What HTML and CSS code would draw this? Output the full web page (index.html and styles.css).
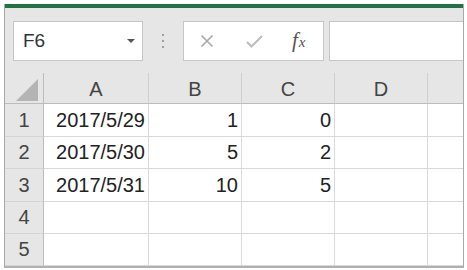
FILE: index.html
```html
<!DOCTYPE html>
<html>
<head>
<meta charset="utf-8">
<link rel="stylesheet" href="styles.css">
</head>
<body>
<div class="frame">
  <div class="green"></div>
  <div class="toolbar">
    <div class="namebox">
      <span class="name">F6</span>
      <span class="caret"></span>
    </div>
    <div class="dots"><i></i><i></i><i></i></div>
    <div class="fxbox">
      <svg class="ico-x" width="14" height="14" viewBox="0 0 14 14"><path d="M1.5 1.5 L12.5 12.5 M12.5 1.5 L1.5 12.5" stroke="#a8a8a8" stroke-width="1.6" fill="none"/></svg>
      <svg class="ico-check" width="17" height="13" viewBox="0 0 17 13"><path d="M1 7 L5.5 11.5 L16 1" stroke="#bdbdbd" stroke-width="2" fill="none"/></svg>
      <span class="fx"><span class="f">f</span><span class="x">x</span></span>
    </div>
    <div class="formula"></div>
  </div>
  <div class="grid">
    <div class="corner"><svg width="22" height="22" viewBox="0 0 22 22"><polygon points="22,0 22,22 0,22" fill="#b4b4b4"/></svg></div>
    <div class="ch">A</div><div class="ch">B</div><div class="ch">C</div><div class="ch">D</div><div class="ch last"></div>

    <div class="rh">1</div><div class="c">2017/5/29</div><div class="c">1</div><div class="c">0</div><div class="c"></div><div class="c last"></div>
    <div class="rh">2</div><div class="c">2017/5/30</div><div class="c">5</div><div class="c">2</div><div class="c"></div><div class="c last"></div>
    <div class="rh">3</div><div class="c">2017/5/31</div><div class="c">10</div><div class="c">5</div><div class="c"></div><div class="c last"></div>
    <div class="rh">4</div><div class="c"></div><div class="c"></div><div class="c"></div><div class="c"></div><div class="c last"></div>
    <div class="rh">5</div><div class="c"></div><div class="c"></div><div class="c"></div><div class="c"></div><div class="c last"></div>
  </div>
</div>
</body>
</html>
```
FILE: styles.css
```css
* { box-sizing: border-box; }
html, body { margin: 0; padding: 0; background: #fff; }
body { font-family: "Liberation Sans", Arial, sans-serif; }

.frame {
  margin: 4px 0 0 4px;
  width: 460px;
  border-left: 1px solid #a9a9a9;
  border-right: 1px solid #a9a9a9;
  border-bottom: 2px solid #b0b0b0;
  background: #e6e6e6;
}
.green { height: 4px; background: #217346; }

.toolbar {
  display: flex;
  align-items: flex-start;
  height: 65px;
  padding: 13px 0 0 8px;
  background: #e6e6e6;
}
.namebox {
  width: 130px;
  height: 40px;
  background: #fff;
  border: 1px solid #c6c6c6;
  display: flex;
  align-items: center;
  justify-content: space-between;
  padding: 0 7px 0 9px;
}
.name { font-size: 19px; color: #333; }
.caret {
  width: 0; height: 0;
  border-left: 4px solid transparent;
  border-right: 4px solid transparent;
  border-top: 4px solid #555;
}
.dots {
  width: 40px;
  height: 40px;
  display: flex;
  flex-direction: column;
  align-items: center;
  justify-content: center;
  gap: 4px;
}
.dots i { display: block; width: 2px; height: 2px; background: #a0a0a0; }
.fxbox {
  width: 141px;
  height: 40px;
  background: #fff;
  border: 1px solid #c6c6c6;
  display: flex;
  align-items: center;
  padding-left: 16px;
}
.ico-x { margin-right: 32px; }
.ico-check { margin-right: 29px; margin-top: 1px; }
.fx { font-family: "Liberation Serif", "Times New Roman", serif; font-style: italic; color: #555; font-size: 21px; line-height: 1; margin-top: -2px; }
.fx .x { font-size: 15px; margin-left: 1px; }
.formula {
  flex: 1;
  height: 40px;
  margin-left: 5px;
  background: #fff;
  border: 1px solid #c6c6c6;
  border-right: none;
}

.grid {
  display: grid;
  grid-template-columns: 39px 105px 93px 93px 93px 35px;
  grid-template-rows: 31px 33px 32px 33px 32px 32px;
  font-size: 20px;
}
.corner {
  background: #e6e6e6;
  border-right: 1px solid #bcbcbc;
  border-bottom: 1px solid #bcbcbc;
  display: flex;
  align-items: flex-end;
  justify-content: flex-end;
  padding: 0 5px 2px 0;
}
.ch {
  background: #e6e6e6;
  border-right: 1px solid #d0d0d0;
  border-bottom: 1px solid #bcbcbc;
  display: flex;
  align-items: center;
  justify-content: center;
  color: #444;
  padding-top: 2px;
}
.rh {
  background: #e6e6e6;
  border-right: 1px solid #bcbcbc;
  border-bottom: 1px solid #d4d4d4;
  display: flex;
  align-items: center;
  justify-content: center;
  color: #444;
}
.c {
  background: #fff;
  border-right: 1px solid #d9d9d9;
  border-bottom: 1px solid #d9d9d9;
  display: flex;
  align-items: center;
  justify-content: flex-end;
  padding-right: 3px;
  color: #222;
}
.last { border-right: none; }
```
